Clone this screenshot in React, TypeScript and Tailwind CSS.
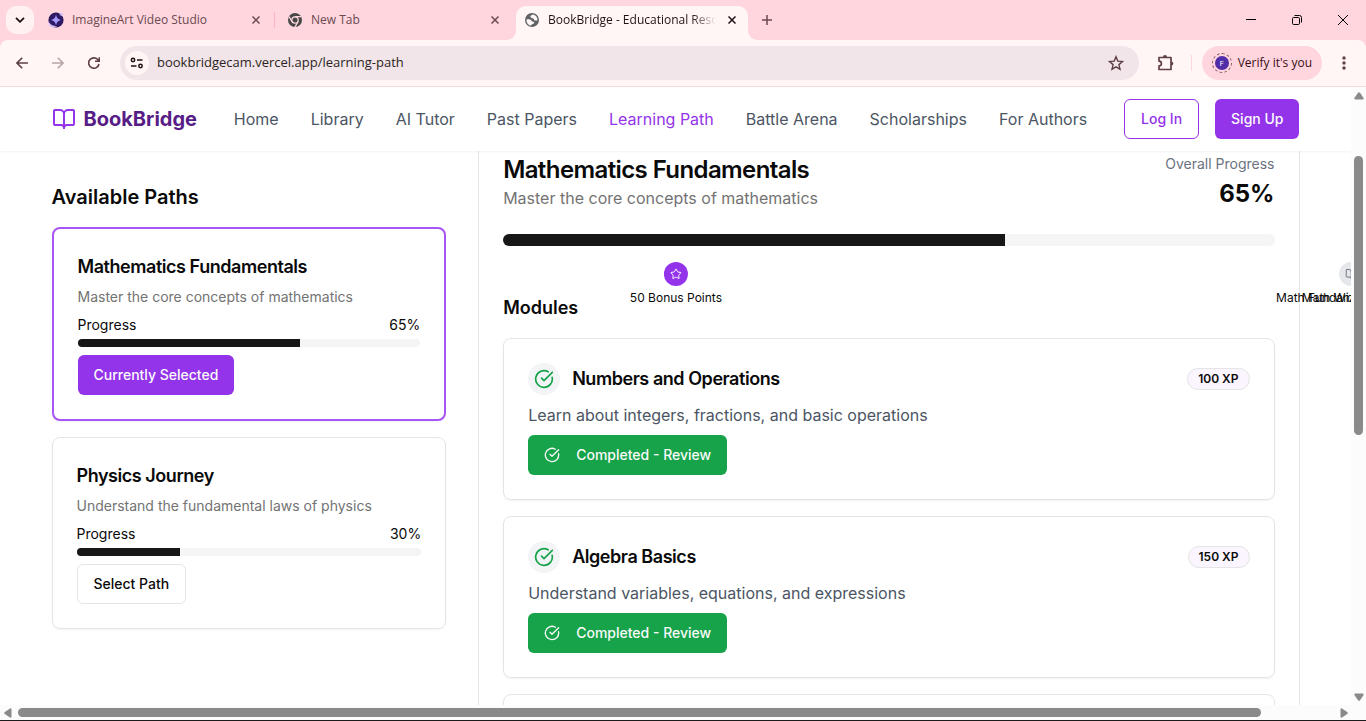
import type { ReactNode } from 'react';
import { BookOpen, CircleCheckBig, Star } from 'lucide-react';

const NAV_LINKS = ['Home', 'Library', 'AI Tutor', 'Past Papers', 'Learning Path', 'Battle Arena', 'Scholarships', 'For Authors'];

const PATHS = [
  { title: 'Mathematics Fundamentals', description: 'Master the core concepts of mathematics', progress: 65, selected: true },
  { title: 'Physics Journey', description: 'Understand the fundamental laws of physics', progress: 30, selected: false },
];

const MODULES = [
  { title: 'Numbers and Operations', description: 'Learn about integers, fractions, and basic operations', xp: 100 },
  { title: 'Algebra Basics', description: 'Understand variables, equations, and expressions', xp: 150 },
  { title: 'Geometry Essentials', description: 'Explore shapes, angles, and spatial reasoning', xp: 200 },
];

const MILESTONES = [
  { label: '50 Bonus Points', position: 22.4, reached: true },
  { label: 'Math Fundamentals Badge', position: 110, reached: false },
  { label: 'Math Wizard Title', position: 110, reached: false },
];

function CloseIcon() {
  return (
    <svg viewBox="0 0 8 8" className="size-2" fill="none" stroke="currentColor" strokeWidth="1.5">
      <path d="M.5.5l7 7M7.5.5l-7 7" />
    </svg>
  );
}

function StudioIcon() {
  return (
    <svg viewBox="0 0 16 16" className="size-4 shrink-0">
      <circle cx="8" cy="8" r="7.6" fill="#2e1a63" />
      <path d="M11 1.5c1.2-.6 3-.7 4 .4-.2.9-1 1.8-1.8 2.3zM.5 9.5c-.4 1.8 1 4.500 3.5 5.5 2 .5 4-.2 5-1-3 .3-6.500-1-8.500-4.500z" fill="#c9b8f5" />
      <path d="M8 2.800c.6 3.100 1.900 4.500 5 5.200-3.100.7-4.400 2.100-5 5.200-.6-3.100-1.900-4.500-5-5.200 3.100-.7 4.400-2.100 5-5.200z" fill="#a79bff" />
    </svg>
  );
}

function ChromeIcon() {
  return (
    <svg viewBox="0 0 16 16" className="size-4 shrink-0">
      <circle cx="8" cy="8" r="7" fill="#474747" />
      <circle cx="8" cy="8" r="3.2" fill="#474747" stroke="#ffd6de" strokeWidth="1.3" />
      <path d="M8 4.600h6.200M5 9.700L2 4.500M11 9.700l-3 5.200" stroke="#ffd6de" strokeWidth="1.3" />
    </svg>
  );
}

function GlobeIcon() {
  return (
    <svg viewBox="0 0 16 16" className="size-4 shrink-0">
      <circle cx="8" cy="8" r="7" fill="#5f6368" />
      <path d="M9 2.500c-1.300.3-2.600 1-2.600 2.200 0 1.600 2.300 1.100 3.200 2 .6.600.4 1.400 1.300 1.700.8.3 1.700.1 2.600-.1C13.600 5.200 12 2.900 9 2.500zM2.500 7.400c1.400-.2 3.800-.3 4.700.6.600.6.300 1.300 1 1.600.7.3 1.500 0 1.900.6.500.9-.5 1.500-1.500 1.700-.7.200-.8.900-1.600 1.600C4.400 13.300 2.200 10.800 2.500 7.400z" fill="#fff6f5" />
    </svg>
  );
}

type TabProps = { title: string; icon: ReactNode; separator?: boolean };

function InactiveTab({ title, icon, separator }: TabProps) {
  return (
    <div className="flex w-[239px] items-center gap-2 pl-3 text-[#6b4a50]">
      {icon}
      <span className="flex-1 truncate text-[12px]">{title}</span>
      <button type="button" aria-label={`Close ${title}`} className="mr-[2px] p-1">
        <CloseIcon />
      </button>
      <span className={separator ? 'h-4 w-px bg-[#ffb3c1]' : 'h-4 w-px'} />
    </div>
  );
}

function TabStrip() {
  return (
    <div className="flex h-10 shrink-0 bg-[#ffd6de] text-[#1f1214]">
      <div className="flex w-9 items-center pl-[6px]">
        <button type="button" aria-label="Search tabs" className="flex size-7 items-center justify-center rounded-[10px] bg-[#fff0f1]">
          <svg viewBox="0 0 10 6" className="h-[6px] w-[10px]" fill="none" stroke="currentColor" strokeWidth="1.8">
            <path d="M1 .8l4 4 4-4" />
          </svg>
        </button>
      </div>
      <InactiveTab title="ImagineArt Video Studio" icon={<StudioIcon />} separator />
      <InactiveTab title="New Tab" icon={<ChromeIcon />} />
      <div className="flex items-end">
        <svg viewBox="0 0 10 10" className="-ml-2 size-[10px]" fill="#fff6f5">
          <path d="M10 0v10H0C6 10 10 6 10 0z" />
        </svg>
        <div className="flex h-[34px] w-[232px] items-center gap-2 rounded-t-[10px] bg-[#fff6f5] px-2 pb-[6px]">
          <GlobeIcon />
          <span className="flex-1 overflow-hidden bg-gradient-to-r from-[#1f1214] from-85% to-[#fff6f5] bg-clip-text text-[12px] whitespace-nowrap text-transparent">
            BookBridge - Educational Resources
          </span>
          <button type="button" aria-label="Close BookBridge" className="p-1">
            <CloseIcon />
          </button>
        </div>
        <svg viewBox="0 0 10 10" className="size-[10px]" fill="#fff6f5">
          <path d="M0 0v10h10C4 10 0 6 0 0z" />
        </svg>
      </div>
      <button type="button" aria-label="New tab" className="px-1 text-[#6b4a50]">
        <svg viewBox="0 0 10 10" className="size-[10px]" fill="none" stroke="currentColor" strokeWidth="1.5">
          <path d="M5 0v10M0 5h10" />
        </svg>
      </button>
      <div className="ml-auto flex items-center gap-9 pr-[18px]">
        <button type="button" aria-label="Minimize">
          <svg viewBox="0 0 10 10" className="size-[10px]" stroke="#000"><path d="M0 4.5h10" /></svg>
        </button>
        <button type="button" aria-label="Restore">
          <svg viewBox="0 0 10 10" className="size-[10px]" fill="none" stroke="#000">
            <rect x=".5" y="2.5" width="7" height="7" rx="1.2" />
            <path d="M2.500 .5h5a2 2 0 0 1 2 2v5" />
          </svg>
        </button>
        <button type="button" aria-label="Close window">
          <svg viewBox="0 0 10 10" className="size-[10px]" stroke="#000"><path d="M0 0l10 10M10 0L0 10" /></svg>
        </button>
      </div>
    </div>
  );
}

function Toolbar() {
  return (
    <div className="shrink-0 bg-[#ffd6de]">
      <div className="flex h-[47px] items-center rounded-t-lg border-b border-[#f5dcdc] bg-[#fff6f5] pl-4 text-[#5e4046]">
        <button type="button" aria-label="Back" className="mr-6">
          <svg viewBox="0 0 12 12" className="size-3" fill="none" stroke="currentColor" strokeWidth="1.6"><path d="M12 6H1M6.200.8L1 6l5.200 5.200" /></svg>
        </button>
        <button type="button" aria-label="Forward" className="mr-6 text-[#b8a5a7]">
          <svg viewBox="0 0 12 12" className="size-3" fill="none" stroke="currentColor" strokeWidth="1.6"><path d="M0 6h11M5.800.8L11 6l-5.200 5.200" /></svg>
        </button>
        <button type="button" aria-label="Reload" className="mr-5">
          <svg viewBox="0 0 12 12" className="size-3" fill="none" stroke="currentColor" strokeWidth="1.6"><path d="M11 7a5.200 5.200 0 1 1-1.300-4.500L11 4M11.300.2v4.100H7" /></svg>
        </button>
        <div className="flex h-[34px] flex-1 items-center rounded-full bg-[#f1e5e9] px-[5px]">
          <button type="button" aria-label="Site information" className="flex size-6 items-center justify-center rounded-full bg-[#fff6f5] text-[#1f1214]">
            <svg viewBox="0 0 14 12" className="h-3 w-[14px]" fill="none" stroke="currentColor" strokeWidth="1.5">
              <circle cx="3" cy="3" r="1.7" />
              <path d="M7 3h5.500M1 9h5.500" />
              <circle cx="10.5" cy="9" r="1.7" />
            </svg>
          </button>
          <input
            type="text"
            aria-label="Address"
            defaultValue="bookbridgecam.vercel.app/learning-path"
            className="min-w-0 flex-1 px-2 text-[13px] text-[#2b1f22] outline-none"
          />
          <button type="button" aria-label="Bookmark this page" className="mr-[10px]">
            <svg viewBox="0 0 16 16" className="size-4" fill="none" stroke="currentColor" strokeWidth="1.4"><path d="M8 1.700l1.800 4.400 4.700.4-3.600 3.100 1.100 4.600L8 11.800l-4 2.400 1.100-4.600-3.600-3.100 4.700-.4z" /></svg>
          </button>
        </div>
        <button type="button" aria-label="Extensions" className="ml-4">
          <svg viewBox="0 0 20 20" className="size-5" fill="none" stroke="currentColor" strokeWidth="1.7">
            <path d="M4 4.500h12v12H4v-3.600a2.400 2.400 0 0 0 0-4.800z" strokeLinejoin="round" />
            <path d="M8 4a2 2 0 0 1 4 0zM16.300 8.500a2 2 0 0 1 0 4z" fill="currentColor" stroke="none" />
          </svg>
        </button>
        <span className="mr-[10px] ml-4 h-4 w-px bg-[#ffd6de]" />
        <button type="button" className="flex h-[34px] items-center gap-[6px] rounded-full bg-[#ffd6de] px-[10px] text-[12px] text-[#3b0d16]">
          <span className="flex size-5 items-center justify-center rounded-full border border-dashed border-[#7d5560]">
            <span className="flex size-[14px] items-center justify-center rounded-full bg-[#512da8] text-[8px] leading-none text-white">F</span>
          </span>
          Verify it's you
        </button>
        <button type="button" aria-label="Menu" className="mx-5">
          <svg viewBox="0 0 4 16" className="h-4 w-1" fill="currentColor">
            <circle cx="2" cy="3" r="1.7" /><circle cx="2" cy="8" r="1.7" /><circle cx="2" cy="13" r="1.7" />
          </svg>
        </button>
      </div>
    </div>
  );
}

function SiteHeader() {
  return (
    <header className="relative z-10 bg-white shadow-xs">
      <div className="mx-auto flex h-16 max-w-7xl items-center justify-between px-4">
        <a href="#home" className="flex items-center gap-2">
          <BookOpen className="size-6 text-[#9333ea]" />
          <span className="text-xl font-bold text-[#581c87]">BookBridge</span>
        </a>
        <nav className="flex items-center gap-8">
          {NAV_LINKS.map((link) => (
            <a key={link} href="#nav" className={link === 'Learning Path' ? 'text-[#9333ea]' : 'text-[#4b5563]'}>
              {link}
            </a>
          ))}
        </nav>
        <div className="flex items-center gap-4">
          <button type="button" className="h-10 rounded-md border border-[#9333ea] bg-white px-4 text-sm font-medium text-[#9333ea]">Log In</button>
          <button type="button" className="h-10 rounded-md bg-[#9333ea] px-4 text-sm font-medium text-[#fafafa]">Sign Up</button>
        </div>
      </div>
    </header>
  );
}

function ProgressBar({ value, large }: { value: number; large?: boolean }) {
  return (
    <div className={large ? 'h-3 overflow-hidden rounded-full bg-[#f5f5f5]' : 'h-2 overflow-hidden rounded-full bg-[#f5f5f5]'}>
      <div className="h-full bg-[#171717]" style={{ width: `${value}%` }} />
    </div>
  );
}

function PathCard({ path }: { path: (typeof PATHS)[number] }) {
  return (
    <div className={path.selected ? 'rounded-lg border-2 border-[#a855f7] p-6 shadow-xs' : 'rounded-lg border border-[#e5e5e5] p-6 shadow-xs'}>
      <h3 className="text-lg font-semibold tracking-tight">{path.title}</h3>
      <p className="mt-[6px] text-sm text-[#737373]">{path.description}</p>
      <div className="mt-2 mb-1 flex justify-between text-sm">
        <span>Progress</span>
        <span>{path.progress}%</span>
      </div>
      <ProgressBar value={path.progress} />
      <button
        type="button"
        className={
          path.selected
            ? 'mt-2 h-10 rounded-md bg-[#9333ea] px-4 text-sm font-medium text-[#fafafa]'
            : 'mt-2 h-10 rounded-md border border-[#e5e5e5] px-4 text-sm font-medium'
        }
      >
        {path.selected ? 'Currently Selected' : 'Select Path'}
      </button>
    </div>
  );
}

function ModuleCard({ module }: { module: (typeof MODULES)[number] }) {
  return (
    <div className="rounded-lg border border-[#e5e5e5] p-6 shadow-xs">
      <div className="flex items-center gap-3">
        <span className="flex size-8 items-center justify-center rounded-full bg-[#f3f4f6]">
          <CircleCheckBig className="size-5 text-[#16a34a]" />
        </span>
        <h4 className="flex-1 text-lg font-semibold tracking-tight">{module.title}</h4>
        <span className="rounded-full border border-[#e5e5e5] bg-[#faf5ff] px-[10px] py-[2px] text-xs font-semibold">{module.xp} XP</span>
      </div>
      <p className="mt-2 text-[#4b5563]">{module.description}</p>
      <button type="button" className="mt-2 flex h-10 items-center gap-4 rounded-md bg-[#16a34a] px-4 text-sm font-medium text-[#fafafa]">
        <CircleCheckBig className="size-4" />
        Completed - Review
      </button>
    </div>
  );
}

function PathDetail() {
  return (
    <section className="col-span-2 border-x border-[#e5e5e5] px-6">
      <div className="flex items-start justify-between pt-[3px]">
        <div>
          <h2 className="text-2xl font-semibold tracking-tight">Mathematics Fundamentals</h2>
          <p className="text-[#737373]">Master the core concepts of mathematics</p>
        </div>
        <div className="text-right">
          <p className="text-sm text-[#6b7280]">Overall Progress</p>
          <p className="mt-1 text-2xl font-bold">65%</p>
        </div>
      </div>
      <div className="relative mt-6">
        <ProgressBar value={65} large />
        {MILESTONES.map((milestone) => (
          <div
            key={milestone.label}
            className="absolute top-7 flex -translate-x-1/2 flex-col items-center gap-1"
            style={{ left: `${milestone.position}%` }}
          >
            <span className={milestone.reached ? 'rounded-full bg-[#9333ea] p-[6px] text-white' : 'rounded-full bg-[#e5e7eb] p-[6px] text-[#6b7280]'}>
              {milestone.reached ? <Star className="size-3" /> : <BookOpen className="size-3" />}
            </span>
            <span className="text-xs whitespace-nowrap">{milestone.label}</span>
          </div>
        ))}
      </div>
      <h3 className="mt-12 text-lg font-semibold">Modules</h3>
      <div className="mt-4 space-y-4">
        {MODULES.map((module) => (
          <ModuleCard key={module.title} module={module} />
        ))}
      </div>
    </section>
  );
}

export default function App() {
  return (
    <div className="flex h-screen flex-col overflow-hidden bg-white font-['Open_Sans',sans-serif]">
      <TabStrip />
      <Toolbar />
      <div className="flex min-h-0 flex-1">
        <div className="min-w-0 flex-1 overflow-hidden font-['Inter',sans-serif] text-[#0a0a0a]">
          <SiteHeader />
          <main className="mx-auto grid max-w-7xl grid-cols-3 gap-8 px-4">
            <aside className="pt-8">
              <h2 className="text-xl font-semibold">Available Paths</h2>
              <div className="mt-4 space-y-4">
                {PATHS.map((path) => (
                  <PathCard key={path.title} path={path} />
                ))}
              </div>
            </aside>
            <PathDetail />
          </main>
        </div>
        <div className="flex w-[15px] flex-col items-center bg-[#fcfcfc] pt-[5px] pb-1">
          <svg viewBox="0 0 10 8" className="h-2 w-[10px]" fill="#8a8a8a"><path d="M4 .8Q5-.4 6 .8L9.600 6Q10 7.500 8.500 7.500h-7Q0 7.500.4 6z" /></svg>
          <div className="flex w-full flex-1 flex-col items-center pt-14">
            <div className="h-[52%] w-[9px] rounded-full bg-[#8a8a8a]" />
          </div>
          <svg viewBox="0 0 10 8" className="h-2 w-[10px]" fill="#8a8a8a"><path d="M4 7.200Q5 8.400 6 7.200L9.600 2Q10 .5 8.500.5h-7Q0 .5.4 2z" /></svg>
        </div>
      </div>
      <div className="flex h-4 shrink-0 items-center border-b border-[#1b1b1b] bg-[#fcfcfc] pr-[18px] pl-1">
        <svg viewBox="0 0 8 10" className="h-[10px] w-2" fill="#8a8a8a"><path d="M.8 4Q-.4 5 .8 6L6 9.600Q7.500 10 7.500 8.500v-7Q7.500 0 6 .4z" /></svg>
        <div className="flex flex-1 pl-[6px]">
          <div className="h-[9px] w-[94%] rounded-full bg-[#8a8a8a]" />
        </div>
        <svg viewBox="0 0 8 10" className="h-[10px] w-2" fill="#8a8a8a"><path d="M7.200 4Q8.400 5 7.200 6L2 9.600Q.5 10 .5 8.500v-7Q.5 0 2 .4z" /></svg>
      </div>
    </div>
  );
}
